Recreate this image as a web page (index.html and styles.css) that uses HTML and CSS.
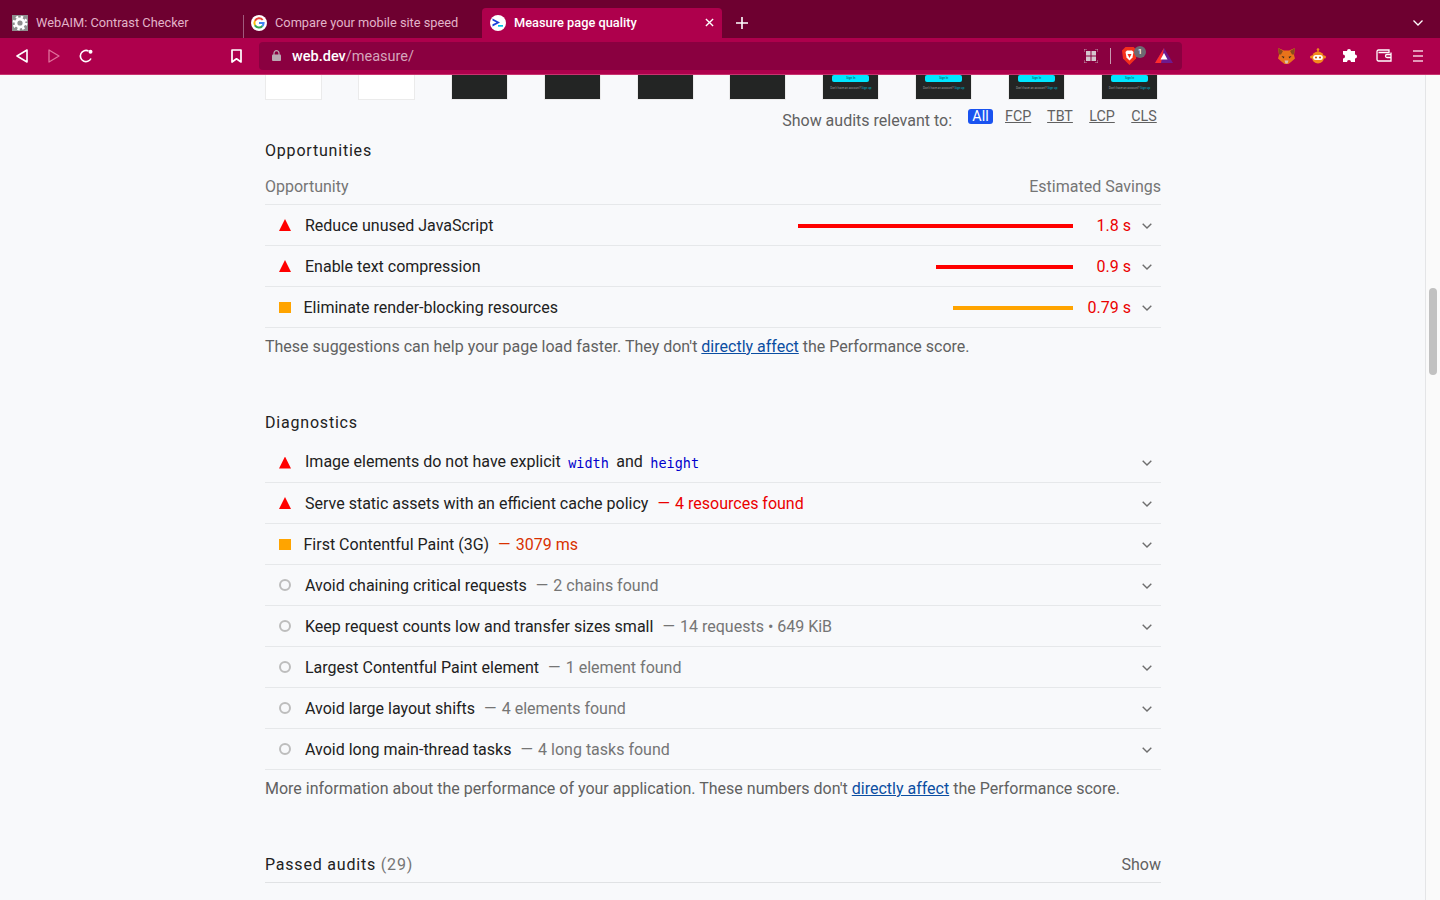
FILE: index.html
```html
<!DOCTYPE html>
<html lang="en">
<head>
<meta charset="utf-8">
<title>Measure page quality</title>
<link rel="stylesheet" href="styles.css">
</head>
<body>
<div class="tabstrip">
  <div class="tab tab-first">
    <svg class="fav" viewBox="0 0 16 16"><rect width="16" height="16" fill="#8f8f8f"/><circle cx="8" cy="8" r="4" fill="none" stroke="#fff" stroke-width="2.800"/><circle cx="8" cy="8" r="6.200" fill="none" stroke="#fff" stroke-width="2.400" stroke-dasharray="2.400 2.470"/></svg>
    <span class="tab-title">WebAIM: Contrast Checker</span>
  </div>
  <div class="tab tab-second">
    <svg class="fav fav-round" viewBox="0 0 16 16"><circle cx="8" cy="8" r="8" fill="#fff"/><path fill="none" stroke="#ea4335" stroke-width="2" d="M11.700 5A4.600 4.600 0 0 0 4 5.800"/><path fill="none" stroke="#fbbc05" stroke-width="2" d="M4 5.800a4.600 4.600 0 0 0 0 4.400"/><path fill="none" stroke="#34a853" stroke-width="2" d="M4 10.200A4.600 4.600 0 0 0 11.400 11"/><path fill="none" stroke="#4285f4" stroke-width="2" d="M11.400 11a4.600 4.600 0 0 0 1.200-3H8"/></svg>
    <span class="tab-title">Compare your mobile site speed</span>
  </div>
  <div class="tab tab-active">
    <svg class="fav fav-round" viewBox="0 0 16 16"><circle cx="8" cy="8" r="8" fill="#fff"/><path d="M2.500 3.500 10 7.500 2.500 11.500V9.200L6.500 7.500 2.500 5.600z" fill="#1a3fd8"/><rect x="8" y="10" width="5" height="1.700" fill="#00c4e8"/></svg>
    <span class="tab-title">Measure page quality</span>
    <svg class="tab-close" viewBox="0 0 10 10"><path d="M1 1l8 8M9 1l-8 8" stroke="#fff" stroke-width="1.500"/></svg>
  </div>
  <svg class="new-tab" viewBox="0 0 12 12"><path d="M6 0v12M0 6h12" stroke="#fff" stroke-width="1.600"/></svg>
  <svg class="tab-menu" viewBox="0 0 10 6"><path d="M.5.500 5 5 9.500.500" fill="none" stroke="#fff" stroke-width="1.300"/></svg>
</div>

<div class="toolbar">
  <svg class="tb-back" viewBox="0 0 12 14"><path d="M11 1v12L1 7z" fill="none" stroke="#fff" stroke-width="1.600" stroke-linejoin="round"/></svg>
  <svg class="tb-forward" viewBox="0 0 12 14"><path d="M1 1v12l10-6z" fill="none" stroke="#e0709c" stroke-width="1.300" stroke-linejoin="round"/></svg>
  <svg class="tb-reload" viewBox="0 0 14 14"><path d="M12 9.500A5.600 5.600 0 1 1 9.500 2" fill="none" stroke="#fff" stroke-width="1.600"/><circle cx="11.500" cy="2.800" r="2" fill="#fff"/></svg>
  <svg class="tb-bookmark" viewBox="0 0 11 14"><path d="M1 1h9v12L5.500 9.800 1 13z" fill="none" stroke="#fff" stroke-width="1.700" stroke-linejoin="round"/></svg>
  <div class="urlbar">
    <svg class="lock" viewBox="0 0 9 11"><path d="M2 5V3.200a2.500 2.500 0 0 1 5 0V5" fill="none" stroke="#b9a9b2" stroke-width="1.200"/><rect y="4.500" width="9" height="6.500" rx="1" fill="#b9a9b2"/></svg>
    <span class="url"><span class="url-host">web.dev</span>/measure/</span>
    <svg class="qr" viewBox="0 0 14 14"><path d="M0 3V0h3M11 0h3v3M14 11v3h-3M3 14H0v-3" fill="none" stroke="#c9b5c0" stroke-width=".8"/><rect x="2" y="2" width="4.500" height="4.500" fill="#d5c6ce"/><rect x="7.500" y="2" width="4.500" height="4.500" fill="#d5c6ce"/><rect x="2" y="7.500" width="4.500" height="4.500" fill="#d5c6ce"/><rect x="7.500" y="7.500" width="4.500" height="4.500" fill="#d5c6ce"/></svg>
    <span class="url-sep"></span>
    <span class="shield-wrap">
      <svg class="shield" viewBox="0 0 15 18"><path d="M3.500 0h8L15 3.500l-1 8L7.500 18 1 11.500l-1-8z" fill="#f4301c"/><path d="M3.500 5 5 3.500h5L11.500 5l-1 5.500L7.500 13.500 4.500 10.500z" fill="#fff"/><path d="M5.500 7h4L7.500 11z" fill="#f4301c"/></svg>
      <span class="shield-badge">1</span>
    </span>
    <svg class="bat" viewBox="0 0 18 15"><path d="M9 0l9 15H0z" fill="#6d1a8f"/><path d="M9 0 0 15h6z" fill="#ff2b2b"/><path d="M9 5l3.500 6.500h-7z" fill="#fff"/></svg>
  </div>
  <svg class="ext-fox" viewBox="0 0 17 16"><path d="M0 0l6 2.500h5L17 0l-1 7 1 3.500-4 3.500-2.500 2h-4L4 14 0 10.500 1 7z" fill="#e8731a"/><path d="M0 0l5 3-2 3.500H1zM17 0l-5 3 2 3.500h2z" fill="#8a4a1c"/><path d="M6.500 12.500h4L9.500 15.500h-2z" fill="#d7c1b0"/><path d="M3.500 8l3 .7-1 1.800zM13.500 8l-3 .7 1 1.800z" fill="#3a2a20"/></svg>
  <svg class="ext-bot" viewBox="0 0 16 16"><circle cx="8" cy="1.500" r="1.300" fill="#f38a1d"/><rect x="7.400" y="2" width="1.200" height="3" fill="#f38a1d"/><rect x="0" y="7.500" width="16" height="3" rx="1.500" fill="#f38a1d"/><circle cx="8" cy="9.500" r="6" fill="#f38a1d"/><rect x="3.200" y="7" width="9.600" height="5" rx="2.500" fill="#fff"/><circle cx="6" cy="9.500" r="1.100" fill="#c45b10"/><circle cx="10" cy="9.500" r="1.100" fill="#c45b10"/></svg>
  <svg class="ext-puzzle" viewBox="0 0 15 15"><path d="M5 3a2 2 0 1 1 4 0h4v3.500a2 2 0 1 1 0 4V14H9a2 2 0 1 0-4 0H1v-3.500a2 2 0 1 0 0-4V3z" fill="#fff"/></svg>
  <svg class="ext-wallet" viewBox="0 0 16 13"><path d="M15 3.500V12H2.500A1.500 1.500 0 0 1 1 10.500v-8A1.500 1.500 0 0 1 2.500 1H13v2.500H2.500" fill="none" stroke="#fff" stroke-width="1.300"/><path d="M15 5.500h-4a1 1 0 0 0 0 3h4" fill="none" stroke="#fff" stroke-width="1.300"/></svg>
  <svg class="ext-menu" viewBox="0 0 10 12"><path d="M0 1h10M0 6h10M0 11h10" stroke="#f4cbdc" stroke-width="1.500"/></svg>
</div>

<div class="viewport">
  <main class="page">
    <div class="filmstrip">
      <div class="frame frame-white"></div>
      <div class="frame frame-white"></div>
      <div class="frame frame-dark"></div>
      <div class="frame frame-dark"></div>
      <div class="frame frame-dark"></div>
      <div class="frame frame-dark"></div>
      <div class="frame frame-dark frame-app"><span class="mini-btn">Sign In</span><span class="mini-text">Don't have an account? <b>Sign up</b></span></div>
      <div class="frame frame-dark frame-app"><span class="mini-btn">Sign In</span><span class="mini-text">Don't have an account? <b>Sign up</b></span></div>
      <div class="frame frame-dark frame-app"><span class="mini-btn">Sign In</span><span class="mini-text">Don't have an account? <b>Sign up</b></span></div>
      <div class="frame frame-dark frame-app"><span class="mini-btn">Sign In</span><span class="mini-text">Don't have an account? <b>Sign up</b></span></div>
    </div>

    <div class="relevant">
      <span class="relevant-label">Show audits relevant to:</span>
      <span class="chip chip-on">All</span>
      <span class="chip">FCP</span>
      <span class="chip">TBT</span>
      <span class="chip">LCP</span>
      <span class="chip">CLS</span>
    </div>

    <h2 class="section-title title-opps">Opportunities</h2>
    <div class="col-head"><span>Opportunity</span><span>Estimated Savings</span></div>

    <div class="rows">
      <div class="row">
        <span class="ico tri"></span><span class="name">Reduce unused JavaScript</span>
        <span class="bar-wrap"><span class="bar bar-red bar-275"></span></span>
        <span class="saving">1.8 s</span><svg class="chev" viewBox="0 0 10 6"><path d="M.7.700 5 5 9.300.700" fill="none" stroke="#6e6e6e" stroke-width="1.400"/></svg>
      </div>
      <div class="row">
        <span class="ico tri"></span><span class="name">Enable text compression</span>
        <span class="bar-wrap"><span class="bar bar-red bar-137"></span></span>
        <span class="saving">0.9 s</span><svg class="chev" viewBox="0 0 10 6"><path d="M.7.700 5 5 9.300.700" fill="none" stroke="#6e6e6e" stroke-width="1.400"/></svg>
      </div>
      <div class="row">
        <span class="ico sq"></span><span class="name name-sq">Eliminate render-blocking resources</span>
        <span class="bar-wrap"><span class="bar bar-orange bar-120"></span></span>
        <span class="saving">0.79 s</span><svg class="chev" viewBox="0 0 10 6"><path d="M.7.700 5 5 9.300.700" fill="none" stroke="#6e6e6e" stroke-width="1.400"/></svg>
      </div>
    </div>
    <p class="note note-opps">These suggestions can help your page load faster. They don't <a href="#">directly affect</a> the Performance score.</p>

    <h2 class="section-title title-diag">Diagnostics</h2>
    <div class="rows">
      <div class="row row-code">
        <span class="ico tri"></span><span class="name">Image elements do not have explicit <code>width</code> and <code>height</code></span>
        <svg class="chev chev-auto" viewBox="0 0 10 6"><path d="M.7.700 5 5 9.300.700" fill="none" stroke="#6e6e6e" stroke-width="1.400"/></svg>
      </div>
      <div class="row">
        <span class="ico tri"></span><span class="name">Serve static assets with an efficient cache policy</span><span class="detail detail-red"><span class="dash">—</span> 4 resources found</span>
        <svg class="chev chev-auto" viewBox="0 0 10 6"><path d="M.7.700 5 5 9.300.700" fill="none" stroke="#6e6e6e" stroke-width="1.400"/></svg>
      </div>
      <div class="row">
        <span class="ico sq"></span><span class="name name-sq">First Contentful Paint (3G)</span><span class="detail detail-orange"><span class="dash">—</span> 3079 ms</span>
        <svg class="chev chev-auto" viewBox="0 0 10 6"><path d="M.7.700 5 5 9.300.700" fill="none" stroke="#6e6e6e" stroke-width="1.400"/></svg>
      </div>
      <div class="row">
        <span class="ico circ"></span><span class="name">Avoid chaining critical requests</span><span class="detail"><span class="dash">—</span> 2 chains found</span>
        <svg class="chev chev-auto" viewBox="0 0 10 6"><path d="M.7.700 5 5 9.300.700" fill="none" stroke="#6e6e6e" stroke-width="1.400"/></svg>
      </div>
      <div class="row">
        <span class="ico circ"></span><span class="name">Keep request counts low and transfer sizes small</span><span class="detail"><span class="dash">—</span> 14 requests • 649 KiB</span>
        <svg class="chev chev-auto" viewBox="0 0 10 6"><path d="M.7.700 5 5 9.300.700" fill="none" stroke="#6e6e6e" stroke-width="1.400"/></svg>
      </div>
      <div class="row">
        <span class="ico circ"></span><span class="name">Largest Contentful Paint element</span><span class="detail"><span class="dash">—</span> 1 element found</span>
        <svg class="chev chev-auto" viewBox="0 0 10 6"><path d="M.7.700 5 5 9.300.700" fill="none" stroke="#6e6e6e" stroke-width="1.400"/></svg>
      </div>
      <div class="row">
        <span class="ico circ"></span><span class="name">Avoid large layout shifts</span><span class="detail"><span class="dash">—</span> 4 elements found</span>
        <svg class="chev chev-auto" viewBox="0 0 10 6"><path d="M.7.700 5 5 9.300.700" fill="none" stroke="#6e6e6e" stroke-width="1.400"/></svg>
      </div>
      <div class="row">
        <span class="ico circ"></span><span class="name">Avoid long main-thread tasks</span><span class="detail"><span class="dash">—</span> 4 long tasks found</span>
        <svg class="chev chev-auto" viewBox="0 0 10 6"><path d="M.7.700 5 5 9.300.700" fill="none" stroke="#6e6e6e" stroke-width="1.400"/></svg>
      </div>
    </div>
    <p class="note note-diag">More information about the performance of your application. These numbers don't <a href="#">directly affect</a> the Performance score.</p>

    <div class="passed">
      <h2 class="section-title title-passed">Passed audits <span class="passed-count">(29)</span></h2>
      <span class="show">Show</span>
    </div>
  </main>
  <aside class="scrollbar"><span class="thumb"></span></aside>
</div>
</body>
</html>
```
FILE: styles.css
```css
* { box-sizing: border-box; }
html, body { margin: 0; height: 100%; overflow: hidden; }
body { width: 1440px; height: 900px; font-family: Roboto, sans-serif; background: #f8f9fb; display: flex; flex-direction: column; }

/* tab strip */
.tabstrip { height: 38px; background: #6e0030; display: flex; align-items: flex-end; flex: none; }
.tab { height: 30px; display: flex; align-items: center; font-size: 12.800px; color: #e2b3c8; }
.tab-first { width: 243px; padding: 0 0 1px 12px; }
.tab-second { width: 239px; padding: 0 0 8px 7px; border-left: 1px solid #a05a7c; height: 23px; }
.tab-active { width: 240px; padding: 0 6px 1px 8px; background: #ae004c; color: #fff; font-weight: 500; border-radius: 4px 4px 0 0; }
.fav { width: 16px; height: 16px; margin-right: 8px; flex: none; }
.tab-title { white-space: nowrap; }
.tab-close { width: 9px; height: 9px; margin-left: auto; margin-right: 2px; }
.new-tab { width: 12px; height: 12px; margin: 0 0 9px 14px; }
.tab-menu { width: 10px; height: 6px; margin: 0 17px 12px auto; }

/* toolbar */
.toolbar { height: 37px; background: #ae004c; border-bottom: 1px solid #c8336f; display: flex; align-items: center; flex: none; padding-bottom: 1px; }
.toolbar svg { flex: none; }
.tb-back { width: 12px; height: 14px; margin-left: 16px; }
.tb-forward { width: 12px; height: 14px; margin-left: 20px; }
.tb-reload { width: 14px; height: 14px; margin-left: 19px; }
.tb-bookmark { width: 11px; height: 14px; margin-left: 138px; }
.urlbar { width: 923px; height: 28px; margin-left: 17px; background: #8a0040; border-radius: 4px; display: flex; align-items: center; padding: 0 9px 0 13px; }
.lock { width: 9px; height: 11px; }
.url { font-size: 14.500px; margin: 2px 0 0 11px; color: #d5a5bc; }
.url-host { color: #fff; font-weight: 500; }
.qr { width: 14px; height: 14px; margin-left: auto; }
.url-sep { width: 1px; height: 16px; background: #c79ab0; margin: 0 11px 0 12px; }
.shield-wrap { position: relative; display: flex; width: 15px; height: 18px; margin-top: 1px; }
.shield { width: 15px; height: 18px; }
.shield-badge { position: absolute; left: 12px; top: -1px; width: 12px; height: 12px; border-radius: 50%; background: #6c6a72; color: #fff; font-size: 8px; font-weight: 500; line-height: 12px; text-align: center; }
.bat { width: 18px; height: 15px; margin-left: 18px; }
.ext-fox { width: 17px; height: 16px; margin-left: 96px; }
.ext-bot { width: 16px; height: 16px; margin-left: 15px; }
.ext-puzzle { width: 15px; height: 15px; margin-left: 16px; }
.ext-wallet { width: 16px; height: 13px; margin-left: 19px; }
.ext-menu { width: 10px; height: 12px; margin-left: 21px; }

/* page */
.viewport { flex: 1; display: flex; min-height: 0; overflow: hidden; }
.page { width: 1425px; padding: 0 264px 0 265px; color: #212121; font-size: 16px; }
.filmstrip { display: flex; height: 25px; gap: 35.900px; }
.frame { width: 57px; height: 25px; border: 1px solid #ebebeb; border-top: 0; flex: none; }
.frame-white { background: #fff; }
.frame-dark { background: #232524; display: flex; flex-direction: column; align-items: center; }
.mini-btn { width: 37px; height: 7px; border-radius: 2px; background: #00e5ff; color: #0b3a40; font-size: 3px; line-height: 7px; text-align: center; }
.mini-text { font-size: 3px; line-height: 4px; margin-top: 4px; color: #9a9a9a; white-space: nowrap; }
.mini-text b { color: #00bcd4; font-weight: 400; }

.relevant { height: 29px; display: flex; align-items: flex-start; justify-content: flex-end; padding-right: 4px; font-size: 14.300px; color: #616161; }
.relevant-label { font-size: 16px; line-height: 19px; margin-top: 11px; margin-right: 16px; }
.chip { width: 26px; text-align: center; line-height: 14px; margin-top: 9px; margin-left: 16px; text-decoration: underline; white-space: nowrap; }
.chip-on { width: 25px; background: #1a53f0; color: #fff; text-decoration: none; border-radius: 3px; line-height: 15px; margin-left: 0; }
.chip-on + .chip { margin-left: 12px; }

.section-title { margin: 0; font-size: 16px; font-weight: 400; letter-spacing: .8px; color: #212121; line-height: 19px; }
.title-opps { margin-top: 12px; }
.col-head { display: flex; justify-content: space-between; color: #757575; line-height: 19px; margin-top: 17px; padding-bottom: 8px; border-bottom: 1px solid #e6e8ea; }

.rows { display: flex; flex-direction: column; }
.row { height: 41px; display: flex; align-items: center; border-bottom: 1px solid #e6e8ea; padding-left: 14px; padding-right: 9px; line-height: 19px; }
.row-code { height: 42px; padding-top: 2px; }
.ico { width: 12px; flex: none; margin-right: 14px; }
.tri { height: 12px; background: #ff0000; clip-path: polygon(50% 0, 100% 100%, 0 100%); }
.sq { height: 11px; background: #ffa400; margin-right: 12.500px; }
.circ { height: 12px; border: 2px solid #bdbdbd; border-radius: 50%; }
.name { color: #212121; white-space: nowrap; }
code { font-family: "DejaVu Sans Mono", monospace; font-size: 13.500px; color: #0000cc; margin: 0 3.500px; vertical-align: -1px; }
.detail { color: #757575; margin-left: 9px; white-space: nowrap; }
.dash { letter-spacing: 1.200px; }
.detail-red { color: #eb0000; }
.detail-orange { color: #d93100; }
.bar-wrap { margin: 1px 0 0 auto; display: flex; }
.bar { display: block; height: 4px; }
.bar-red { background: #ff0000; }
.bar-orange { background: #ffa400; }
.bar-275 { width: 275px; }
.bar-137 { width: 137px; }
.bar-120 { width: 120px; }
.saving { width: 58px; text-align: right; color: #eb0000; white-space: nowrap; }
.chev { width: 10px; height: 6px; margin: 1px 0 0 11px; flex: none; }
.chev-auto { margin-left: auto; }

.note { margin: 0; color: #616161; line-height: 19px; }
.note a { color: #0b4ea2; text-decoration: underline; }
.note-opps { margin-top: 9px; }
.title-diag { margin-top: 57px; margin-bottom: 9px; }
.note-diag { margin-top: 9px; }
.passed { display: flex; justify-content: space-between; margin-top: 57px; padding-bottom: 8px; border-bottom: 1px solid #e0e2e4; }
.passed-count { color: #757575; }
.show { color: #616161; line-height: 19px; }

.scrollbar { width: 15px; border-left: 1px solid #e4e5e7; background: #fafafa; position: relative; flex: none; }
.thumb { position: absolute; left: 3px; top: 213px; width: 8px; height: 87px; border-radius: 4px; background: #c1c1c1; }
```
